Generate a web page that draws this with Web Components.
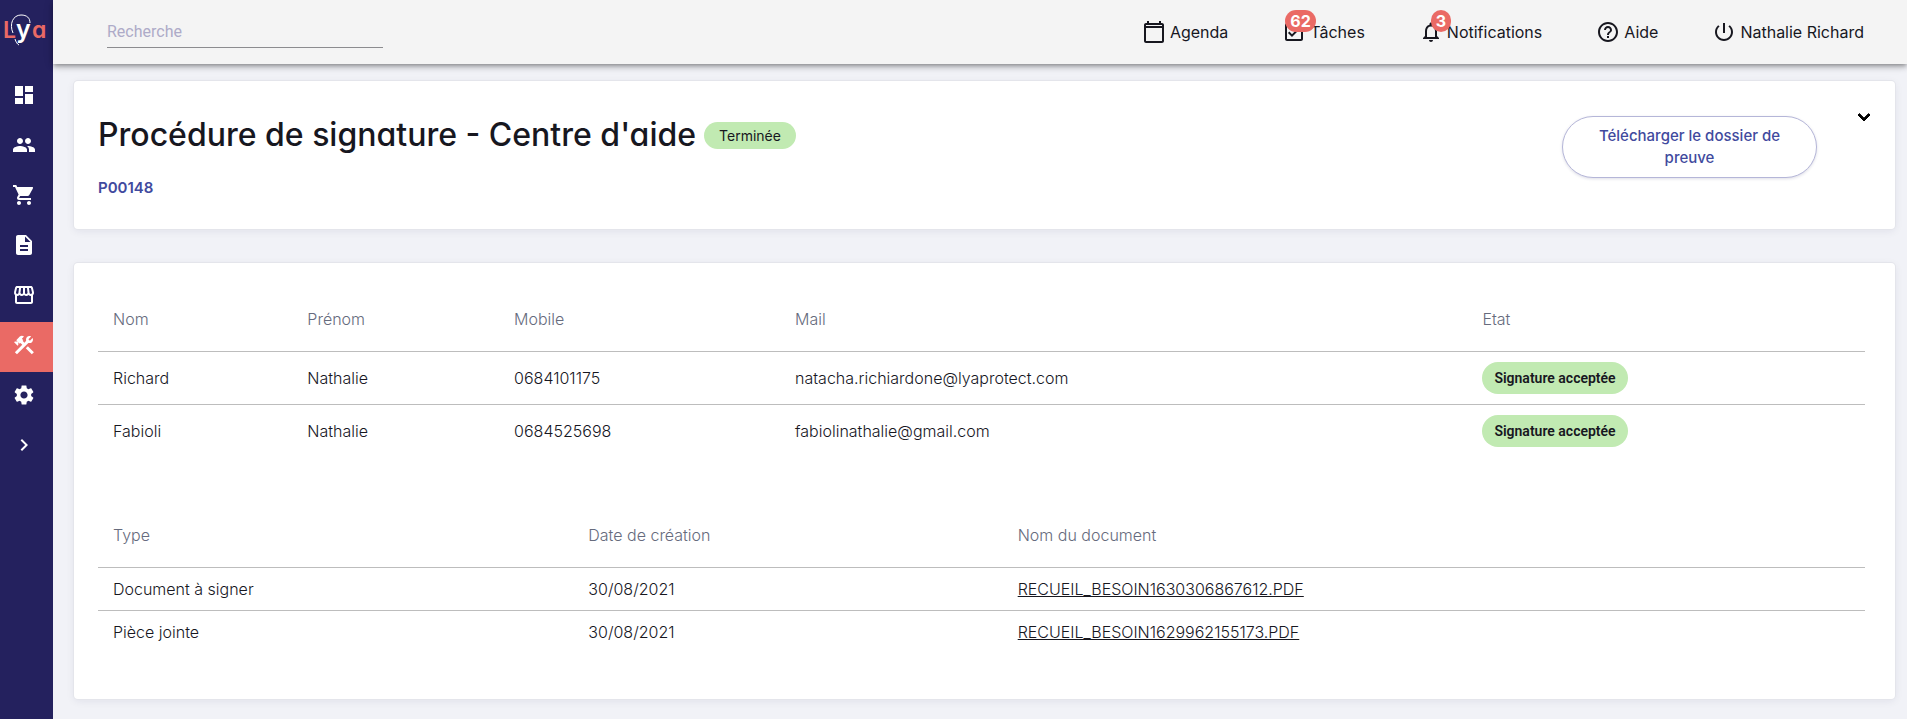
<!DOCTYPE html>
<html lang="fr">
<head>
<meta charset="utf-8">
<meta name="viewport" content="width=device-width, initial-scale=1">
<title>Procédure de signature - Centre d'aide</title>
<style>
  html {
    --navy: #24215e;
    --coral: #ea6a65;
    --indigo: #414a9e;
    --ink: #17171f;
    --green: #c1eab2;
  }

  body {
    margin: 0;
    background: #f1f2f7;
    color: var(--ink);
    font: 16px/22px Inter, "Liberation Sans", sans-serif;
  }
</style>
</head>
<body>
<lya-app></lya-app>

<script>
const ICONS = {
  dashboard: '<path d="M3 13h8V3H3v10zm0 8h8v-6H3v6zm10 0h8V11h-8v10zm0-18v6h8V3h-8z"/>',
  people: '<path d="M16 11c1.66 0 2.99-1.34 2.99-3S17.66 5 16 5s-3 1.34-3 3 1.34 3 3 3zm-8 0c1.66 0 2.99-1.34 2.99-3S9.66 5 8 5 5 6.34 5 8s1.34 3 3 3zm0 2c-2.33 0-7 1.17-7 3.5V19h14v-2.5C15 14.17 10.33 13 8 13zm8 0c-.29 0-.62.02-.97.05 1.16.84 1.97 1.97 1.97 3.45V19h6v-2.5c0-2.33-4.67-3.5-7-3.5z"/>',
  cart: '<path d="M7 18c-1.1 0-1.99.9-1.99 2S5.9 22 7 22s2-.9 2-2-.9-2-2-2zM1 2v2h2l3.6 7.59-1.35 2.45c-.16.28-.25.61-.25.96 0 1.1.9 2 2 2h12v-2H7.42c-.14 0-.25-.11-.25-.25l.03-.12.9-1.63h7.45c.75 0 1.41-.41 1.75-1.03l3.58-6.49A1 1 0 0 0 20 4H5.21l-.94-2H1zm16 16c-1.1 0-1.99.9-1.99 2s.89 2 1.99 2 2-.9 2-2-.9-2-2-2z"/>',
  file: '<path d="M14 2H6c-1.1 0-1.99.9-1.99 2L4 20c0 1.1.89 2 1.99 2H18c1.1 0 2-.9 2-2V8l-6-6zm2 16H8v-2h8v2zm0-4H8v-2h8v2zm-3-5V3.5L18.5 9H13z"/>',
  store: '<path d="M21.9 8.89l-1.05-4.37c-.22-.9-1-1.52-1.91-1.52H5.05c-.9 0-1.69.63-1.9 1.52L2.1 8.89c-.24 1.02-.02 2.06.62 2.88.08.11.19.19.28.29V19c0 1.1.9 2 2 2h14c1.1 0 2-.9 2-2v-6.94c.09-.09.2-.18.28-.28.64-.82.87-1.87.62-2.89zM18.91 4.99l1.05 4.37c.1.42.01.84-.25 1.17-.14.18-.44.47-.94.47-.61 0-1.14-.49-1.21-1.14L16.98 5l1.93-.01zM13 5h1.96l.54 4.52c.05.39-.07.78-.33 1.07-.22.26-.54.41-.95.41-.67 0-1.22-.59-1.22-1.31V5zM8.49 9.52L9.04 5H11v4.69c0 .72-.55 1.31-1.29 1.31-.34 0-.65-.15-.89-.41-.25-.29-.37-.68-.33-1.07zm-4.45-.16L5.05 5h1.97l-.58 4.86c-.08.65-.6 1.14-1.21 1.14-.49 0-.8-.29-.93-.47-.27-.32-.36-.75-.26-1.17zM5 19v-6.03c.08.01.15.03.23.03.87 0 1.66-.36 2.24-.95.6.6 1.4.95 2.31.95.87 0 1.65-.36 2.23-.93.59.57 1.39.93 2.29.93.84 0 1.64-.35 2.24-.95.58.59 1.37.95 2.24.95.08 0 .15-.02.23-.03V19H5z"/>',
  tools: '<path d="M13.78 15.3L19.78 21.3 21.89 19.14 15.89 13.14zM17.5 10.1c-.39 0-.81-.05-1.14-.19L4.97 21.25 2.86 19.14 10.27 11.74 8.5 9.96 7.78 10.66 6.33 9.25V12.11L5.63 12.81 2.11 9.25 2.81 8.55H5.62L4.22 7.14 7.78 3.58C8.95 2.41 10.83 2.41 12 3.58L9.89 5.74 11.3 7.14 10.59 7.85 12.38 9.63 14.2 7.75C14.06 7.42 14 7 14 6.63 14 4.66 15.56 3.11 17.5 3.11 18.09 3.11 18.61 3.25 19.08 3.53L16.41 6.2 17.91 7.7 20.58 5.03C20.86 5.5 21 6 21 6.63 21 8.55 19.45 10.1 17.5 10.1z"/>',
  gear: '<path d="M19.14 12.94c.04-.3.06-.61.06-.94 0-.32-.02-.64-.07-.94l2.03-1.58c.18-.14.23-.41.12-.61l-1.92-3.32c-.12-.22-.37-.29-.59-.22l-2.39.96c-.5-.38-1.03-.7-1.62-.94l-.36-2.54c-.04-.24-.24-.41-.48-.41h-3.84c-.24 0-.43.17-.47.41l-.36 2.54c-.59.24-1.13.57-1.62.94l-2.39-.96c-.22-.08-.47 0-.59.22L2.74 8.87c-.12.21-.08.47.12.61l2.03 1.58c-.05.3-.09.63-.09.94s.02.64.07.94l-2.03 1.58c-.18.14-.23.41-.12.61l1.92 3.32c.12.22.37.29.59.22l2.39-.96c.5.38 1.03.7 1.62.94l.36 2.54c.05.24.24.41.48.41h3.84c.24 0 .44-.17.47-.41l.36-2.54c.59-.24 1.13-.56 1.62-.94l2.39.96c.22.08.47 0 .59-.22l1.92-3.32c.12-.22.07-.47-.12-.61l-2.01-1.58zM12 15.6c-1.98 0-3.6-1.62-3.6-3.6s1.62-3.6 3.6-3.6 3.6 1.62 3.6 3.6-1.62 3.6-3.6 3.6z"/>',
  right: '<path d="M10 6L8.59 7.41 13.17 12l-4.58 4.59L10 18l6-6z"/>',
  down: '<path d="M7.41 8.59L12 13.17l4.59-4.58L18 10l-6 6-6-6z" stroke="currentColor"/>',
  calendar: '<path d="M20 3h-1V1h-2v2H7V1H5v2H4c-1.1 0-2 .9-2 2v16c0 1.1.9 2 2 2h16c1.1 0 2-.9 2-2V5c0-1.1-.9-2-2-2zm0 18H4V8h16v13zm0-15H4V5h16v1z"/>',
  check: '<path d="M19 3H5c-1.1 0-2 .9-2 2v14c0 1.1.9 2 2 2h14c1.1 0 2-.9 2-2V5c0-1.1-.9-2-2-2zm0 16H5V5h14v14zM17.99 9l-1.41-1.42-6.59 6.59-2.58-2.57-1.42 1.41 4 3.99z"/>',
  bell: '<path d="M12 22c1.1 0 2-.9 2-2h-4c0 1.1.9 2 2 2zm6-6v-5c0-3.07-1.63-5.64-4.5-6.32V4c0-.83-.67-1.5-1.5-1.5s-1.5.67-1.5 1.5v.68C7.64 5.36 6 7.92 6 11v5l-2 2v1h16v-1l-2-2zm-2 1H8v-6c0-2.48 1.51-4.5 4-4.5s4 2.02 4 4.5v6z"/>',
  help: '<path d="M11 18h2v-2h-2v2zm1-16C6.48 2 2 6.48 2 12s4.48 10 10 10 10-4.48 10-10S17.52 2 12 2zm0 18c-4.41 0-8-3.59-8-8s3.59-8 8-8 8 3.59 8 8-3.59 8-8 8zm0-14c-2.21 0-4 1.79-4 4h2c0-1.1.9-2 2-2s2 .9 2 2c0 2-3 1.75-3 5h2c0-2.25 3-2.5 3-5 0-2.21-1.79-4-4-4z"/>',
  power: '<path d="M13 3h-2v10h2V3zm4.83 2.17l-1.42 1.42C17.99 7.86 19 9.81 19 12c0 3.87-3.13 7-7 7s-7-3.13-7-7c0-2.19 1.01-4.14 2.58-5.42L6.17 5.17C4.23 6.82 3 9.26 3 12c0 4.97 4.03 9 9 9s9-4.03 9-9c0-2.74-1.23-5.18-3.17-6.83z"/>'
};

class LyaElement extends HTMLElement {
  connectedCallback() {
    if (!this.shadowRoot) {
      this.attachShadow({ mode: 'open' }).innerHTML = this.render();
    }
  }
}

customElements.define('lya-icon', class extends LyaElement {
  render() {
    return `
      <style>
        :host { display: block; flex: none; width: 24px; height: 24px; }
        svg { display: block; fill: currentColor; }
      </style>
      <svg width="24" height="24" viewBox="0 0 24 24" aria-hidden="true">${ICONS[this.getAttribute('name')]}</svg>
    `;
  }
});

customElements.define('lya-logo', class extends LyaElement {
  render() {
    return `
      <style>
        :host { display: block; height: 72px; }
        svg { display: block; }
        text { font-family: Inter, sans-serif; font-size: 23px; font-weight: 600; font-feature-settings: "cv11"; fill: var(--coral); }
        .stem { font-size: 25px; fill: #fff; }
      </style>
      <svg width="53" height="72" viewBox="0 0 53 72" role="img" aria-label="Lya">
        <text x="3" y="38">L</text>
        <path d="M13 33C9 24 13 15 21 15C27 15 30 18 30 23" fill="none" stroke="#fff" stroke-width="1"/>
        <path d="M15 39C16 42 17 44 19 45" fill="none" stroke="#fff" stroke-width="1"/>
        <text class="stem" x="16" y="38">y</text>
        <text x="32" y="38">a</text>
      </svg>
    `;
  }
});

customElements.define('lya-sidebar', class extends LyaElement {
  render() {
    const items = [
      ['dashboard', 'Tableau de bord'],
      ['people', 'Contacts'],
      ['cart', 'Ventes'],
      ['file', 'Documents'],
      ['store', 'Boutique'],
      ['tools', 'Outils'],
      ['gear', 'Paramètres'],
      ['right', 'Déplier le menu']
    ];

    return `
      <style>
        :host { display: block; flex: none; width: 53px; background: var(--navy); }
        nav { display: flex; flex-direction: column; }
        a { display: block; padding: 11px 12px 15px; color: #fff; }
        a[aria-current] { background: var(--coral); }
      </style>
      <lya-logo></lya-logo>
      <nav>
        ${items.map(([icon, label]) => `
          <a href="#" aria-label="${label}"${icon === 'tools' ? ' aria-current="page"' : ''}><lya-icon name="${icon}"></lya-icon></a>
        `).join('')}
      </nav>
    `;
  }
});

customElements.define('lya-nav-link', class extends LyaElement {
  render() {
    const count = this.getAttribute('count');

    return `
      <style>
        :host { display: block; }
        a { position: relative; display: flex; align-items: center; gap: 4px; color: inherit; font-size: 16px; text-decoration: none; white-space: nowrap; }
        .count {
          position: absolute;
          left: 12px;
          top: -10px;
          padding: 0 5px;
          border-radius: 11px;
          background: var(--coral);
          color: #fff;
          font-weight: 700;
          line-height: 22px;
        }
        .count.wide { left: 3px; }
      </style>
      <a href="#">
        <lya-icon name="${this.getAttribute('icon')}"></lya-icon>
        <slot></slot>
        ${count ? `<span class="count${count.length > 1 ? ' wide' : ''}">${count}</span>` : ''}
      </a>
    `;
  }
});

customElements.define('lya-topbar', class extends LyaElement {
  render() {
    return `
      <style>
        :host {
          display: flex;
          align-items: center;
          justify-content: space-between;
          height: 64px;
          padding: 0 43px 0 54px;
          background: #f4f4f4;
          box-shadow: 0 2px 4px -1px rgba(0, 0, 0, .3), 0 4px 5px rgba(0, 0, 0, .14), 0 1px 10px rgba(0, 0, 0, .12);
        }
        input {
          box-sizing: border-box;
          width: 276px;
          height: 32px;
          padding: 0;
          border: 0;
          border-bottom: 1px solid #8c8c8f;
          background: none;
          font: 400 16px Roboto, sans-serif;
        }
        input::placeholder { color: #aeabc8; opacity: 1; }
        nav { display: flex; gap: 54px; }
      </style>
      <input type="search" placeholder="Recherche" aria-label="Recherche">
      <nav>
        <lya-nav-link icon="calendar">Agenda</lya-nav-link>
        <lya-nav-link icon="check" count="62">Tâches</lya-nav-link>
        <lya-nav-link icon="bell" count="3">Notifications</lya-nav-link>
        <lya-nav-link icon="help">Aide</lya-nav-link>
        <lya-nav-link icon="power">Nathalie Richard</lya-nav-link>
      </nav>
    `;
  }
});

customElements.define('lya-card', class extends LyaElement {
  render() {
    return `
      <style>
        :host {
          display: block;
          padding: 24px 30px 46px 24px;
          border-radius: 4px;
          background: #fff;
          box-shadow: 0 0 0 1px #e4e5eb, 0 2px 8px rgba(30, 30, 80, .08);
        }
      </style>
      <slot></slot>
    `;
  }
});

customElements.define('lya-status', class extends LyaElement {
  render() {
    return `
      <style>
        :host {
          display: block;
          width: fit-content;
          padding: 0 12px;
          border-radius: 16px;
          background: var(--green);
          font: 600 14px/32px Roboto, sans-serif;
          white-space: nowrap;
        }
        :host([small]) { padding: 0 15px; font: 400 14px/27px Inter, sans-serif; }
      </style>
      <slot></slot>
    `;
  }
});

customElements.define('lya-procedure-header', class extends LyaElement {
  render() {
    return `
      <style>
        :host { display: flex; align-items: flex-start; }
        .heading { flex: 1; padding-top: 8px; }
        .title { display: flex; align-items: center; gap: 8px; }
        h1 { margin: 0; font-size: 32px; line-height: 44px; font-weight: 500; font-feature-settings: "cv11"; }
        .reference { margin: 20px 0 0; color: var(--indigo); font-size: 15px; font-weight: 600; }
        .download {
          width: 255px;
          margin: 11px 35px 0 0;
          padding: 8px 24px;
          border: 1px solid #b5b6d8;
          border-radius: 31px;
          background: #fff;
          box-shadow: 0 1px 3px rgba(36, 33, 94, .15);
          color: var(--indigo);
          font: 500 15px/22px Inter, sans-serif;
        }
        .toggle { padding: 0; border: 0; background: none; color: #000; }
      </style>
      <div class="heading">
        <div class="title">
          <h1>Procédure de signature - Centre d'aide</h1>
          <lya-status small>Terminée</lya-status>
        </div>
        <p class="reference">P00148</p>
      </div>
      <button class="download" type="button">Télécharger le dossier de preuve</button>
      <button class="toggle" type="button" aria-label="Afficher le détail"><lya-icon name="down"></lya-icon></button>
    `;
  }
});

class LyaTable extends LyaElement {
  render() {
    const cells = (tag, values) => values.map(value => `<${tag}>${value}</${tag}>`).join('');

    return `
      <style>
        :host { display: block; }
        table { width: 100%; table-layout: fixed; border-collapse: collapse; font-weight: 300; font-size: 16px; }
        th, td { padding: 0 15px; text-align: left; font-weight: 300; }
        th { height: 64px; color: #666b7d; }
        td { height: var(--row-height, 42px); border-top: 1px solid #bdbdbd; }
        a { color: inherit; }
      </style>
      <table>
        <colgroup>${this.widths.map(width => `<col style="width: ${width}%">`).join('')}</colgroup>
        <thead><tr>${cells('th', this.columns)}</tr></thead>
        <tbody>${this.rows.map(row => `<tr>${cells('td', row)}</tr>`).join('')}</tbody>
      </table>
    `;
  }
}

customElements.define('lya-signers', class extends LyaTable {
  get widths() {
    return [ 11, 11.7, 15.9, 38.9, 22.5 ];
  }

  get columns() {
    return [ 'Nom', 'Prénom', 'Mobile', 'Mail', 'Etat' ];
  }

  get rows() {
    const accepted = '<lya-status>Signature acceptée</lya-status>';

    return [
      [ 'Richard', 'Nathalie', '0684101175', 'natacha.richiardone@lyaprotect.com', accepted ],
      [ 'Fabioli', 'Nathalie', '0684525698', 'fabiolinathalie@gmail.com', accepted ]
    ];
  }
});

customElements.define('lya-documents', class extends LyaTable {
  get widths() {
    return [ 26.9, 24.3, 48.8 ];
  }

  get columns() {
    return [ 'Type', 'Date de création', 'Nom du document' ];
  }

  get rows() {
    return [
      [ 'Document à signer', '30/08/2021', '<a href="#">RECUEIL_BESOIN1630306867612.PDF</a>' ],
      [ 'Pièce jointe', '30/08/2021', '<a href="#">RECUEIL_BESOIN1629962155173.PDF</a>' ]
    ];
  }
});

customElements.define('lya-app', class extends LyaElement {
  render() {
    return `
      <style>
        :host { display: flex; min-height: 100vh; }
        .page { flex: 1; min-width: 0; }
        main { display: flex; flex-direction: column; gap: 34px; padding: 17px 12px 20px 21px; }
        .tables { display: flex; flex-direction: column; gap: 46px; }
        .procedure { padding: 24px 19px 30px 24px; }
        lya-signers { --row-height: 52px; }
      </style>
      <lya-sidebar></lya-sidebar>
      <div class="page">
        <lya-topbar></lya-topbar>
        <main>
          <lya-card class="procedure"><lya-procedure-header></lya-procedure-header></lya-card>
          <lya-card>
            <div class="tables">
              <lya-signers></lya-signers>
              <lya-documents></lya-documents>
            </div>
          </lya-card>
        </main>
      </div>
    `;
  }
});
</script>
</body>
</html>
